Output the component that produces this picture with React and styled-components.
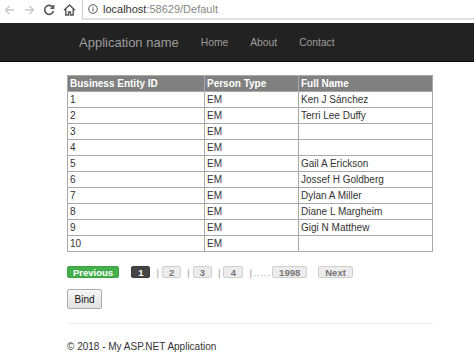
import React from 'react';
import styled, { createGlobalStyle } from 'styled-components';

const GlobalStyle = createGlobalStyle`
  html, body {
    margin: 0;
    padding: 0;
    background: #fff;
    font-family: "Liberation Sans", Arial, sans-serif;
    color: #333;
  }
`;

const BrowserBar = styled.div`
  height: 23px;
  display: flex;
  align-items: flex-start;
  background: #fff;
`;

const NavIcon = styled.div`
  width: 20px;
  height: 19px;
  display: flex;
  align-items: center;
  justify-content: center;
  color: ${p => (p.$dim ? '#c8c8c8' : '#555')};
`;

const IconRow = styled.div`
  display: flex;
  width: 83px;
  margin-left: -1px;
`;

const Omnibox = styled.div`
  flex: 1;
  height: 18px;
  border-left: 1px solid #cfcfcf;
  border-bottom: 2px solid #e0e0e0;
  display: flex;
  align-items: center;
  padding-left: 5px;
  gap: 5px;
  font-size: 11px;
`;

const Host = styled.span`
  color: #333;
`;

const Path = styled.span`
  color: #888;
`;

const Navbar = styled.div`
  height: 38px;
  background: #222;
  border-bottom: 1px solid #080808;
  display: flex;
  align-items: center;
  padding-left: 68px;
`;

const Brand = styled.a`
  font-size: 13px;
  color: #9d9d9d;
  padding: 0 11px;
  text-decoration: none;
`;

const NavLink = styled.a`
  font-size: 10.3px;
  color: #9d9d9d;
  padding: 0 11px;
  text-decoration: none;
`;

const Container = styled.div`
  margin-left: 67px;
  width: 366px;
  padding-top: 13px;
`;

const Grid = styled.table`
  width: 366px;
  border-collapse: collapse;
  font-size: 10px;
  border: 1px solid #a9a9a9;
`;

const HeadCell = styled.th`
  background: #808080;
  color: #fff;
  font-weight: bold;
  text-align: left;
  height: 15px;
  padding: 0 2px;
  border: 1px solid #a9a9a9;
  width: ${p => p.$w}px;
`;

const Cell = styled.td`
  height: 15px;
  padding: 0 2px;
  color: #333;
  border: 1px solid #a9a9a9;
`;

const Pager = styled.div`
  display: flex;
  align-items: center;
  margin-top: 14px;
  height: 12px;
  font-size: 9.5px;
  font-weight: bold;
`;

const PageButton = styled.span`
  display: inline-flex;
  align-items: center;
  justify-content: center;
  height: 12px;
  min-width: ${p => p.$min || 0}px;
  box-sizing: border-box;
  padding: 0 ${p => p.$pad || 6}px;
  border: 1px solid ${p => (p.$variant === 'green' ? '#3ea043' : p.$variant === 'dark' ? '#3a3a3a' : '#cfcfcf')};
  border-radius: 2px;
  background: ${p => (p.$variant === 'green' ? '#45b04b' : p.$variant === 'dark' ? '#444' : '#ececec')};
  color: ${p => (p.$variant ? '#fff' : '#777')};
  margin-left: ${p => p.$ml || 0}px;
`;

const Sep = styled.span`
  color: #999;
  font-weight: normal;
  margin: 0 ${p => (p.$tight ? 0 : 3)}px 0 6px;
`;

const Dots = styled.span`
  color: #999;
  font-weight: normal;
  margin-left: 1px;
  letter-spacing: 1px;
`;

const BindButton = styled.button`
  margin-top: 11px;
  width: 35px;
  height: 20px;
  padding: 0;
  font-family: "Liberation Sans", Arial, sans-serif;
  font-size: 10px;
  color: #111;
  background: linear-gradient(#f6f6f6, #e2e2e2);
  border: 1px solid #acacac;
  border-radius: 2px;
  display: block;
`;

const Rule = styled.hr`
  margin: 14px 0 0;
  border: 0;
  border-top: 1px solid #eee;
`;

const Footer = styled.p`
  margin: 16px 0 0;
  font-size: 10px;
  line-height: 14px;
  color: #333;
`;

const rows = [
  [1, 'EM', 'Ken J Sánchez'],
  [2, 'EM', 'Terri Lee Duffy'],
  [3, 'EM', ''],
  [4, 'EM', ''],
  [5, 'EM', 'Gail A Erickson'],
  [6, 'EM', 'Jossef H Goldberg'],
  [7, 'EM', 'Dylan A Miller'],
  [8, 'EM', 'Diane L Margheim'],
  [9, 'EM', 'Gigi N Matthew'],
  [10, 'EM', ''],
];

const App = () => (
  <>
    <GlobalStyle />
    <BrowserBar>
      <IconRow>
        <NavIcon $dim>
          <svg width="11" height="10" viewBox="0 0 11 10" fill="none" stroke="currentColor" strokeWidth="1.4">
            <path d="M10 5H1.5M5.5 1L1.5 5l4 4" />
          </svg>
        </NavIcon>
        <NavIcon $dim>
          <svg width="11" height="10" viewBox="0 0 11 10" fill="none" stroke="currentColor" strokeWidth="1.4">
            <path d="M1 5h8.5M5.5 1l4 4-4 4" />
          </svg>
        </NavIcon>
        <NavIcon>
          <svg width="12" height="12" viewBox="0 0 12 12" fill="none" stroke="currentColor" strokeWidth="1.6">
            <path d="M10 3.5A4.5 4.5 0 1 0 10.5 7" />
            <path d="M10.6 1v3.2H7.4" />
          </svg>
        </NavIcon>
        <NavIcon>
          <svg width="13" height="12" viewBox="0 0 13 12" fill="none" stroke="currentColor" strokeWidth="1.4">
            <path d="M1 6.2L6.5 1 12 6.2M2.8 5v6h2.7V8h2v3h2.7V5" />
          </svg>
        </NavIcon>
      </IconRow>
      <Omnibox>
        <svg width="10" height="10" viewBox="0 0 10 10" fill="none" stroke="#555" strokeWidth="1">
          <circle cx="5" cy="5" r="4.3" />
          <path d="M5 4.2v3.2M5 2.5v1" />
        </svg>
        <span>
          <Host>localhost</Host>
          <Path>:58629/Default</Path>
        </span>
      </Omnibox>
    </BrowserBar>
    <Navbar>
      <Brand>Application name</Brand>
      <NavLink>Home</NavLink>
      <NavLink>About</NavLink>
      <NavLink>Contact</NavLink>
    </Navbar>
    <Container>
      <Grid>
        <thead>
          <tr>
            <HeadCell $w={132}>Business Entity ID</HeadCell>
            <HeadCell $w={89}>Person Type</HeadCell>
            <HeadCell>Full Name</HeadCell>
          </tr>
        </thead>
        <tbody>
          {rows.map(([id, type, name]) => (
            <tr key={id}>
              <Cell>{id}</Cell>
              <Cell>{type}</Cell>
              <Cell>{name}</Cell>
            </tr>
          ))}
        </tbody>
      </Grid>
      <Pager>
        <PageButton $variant="green" $pad={5}>Previous</PageButton>
        <PageButton $variant="dark" $min={19} $ml={12}>1</PageButton>
        <Sep>|</Sep>
        <PageButton $min={19}>2</PageButton>
        <Sep>|</Sep>
        <PageButton $min={19}>3</PageButton>
        <Sep>|</Sep>
        <PageButton $min={20}>4</PageButton>
        <Sep $tight>|</Sep>
        <Dots>.....</Dots>
        <PageButton $min={35} $ml={1}>1998</PageButton>
        <PageButton $min={34} $ml={11}>Next</PageButton>
      </Pager>
      <BindButton>Bind</BindButton>
      <Rule />
      <Footer>© 2018 - My ASP.NET Application</Footer>
    </Container>
  </>
);

export default App;
